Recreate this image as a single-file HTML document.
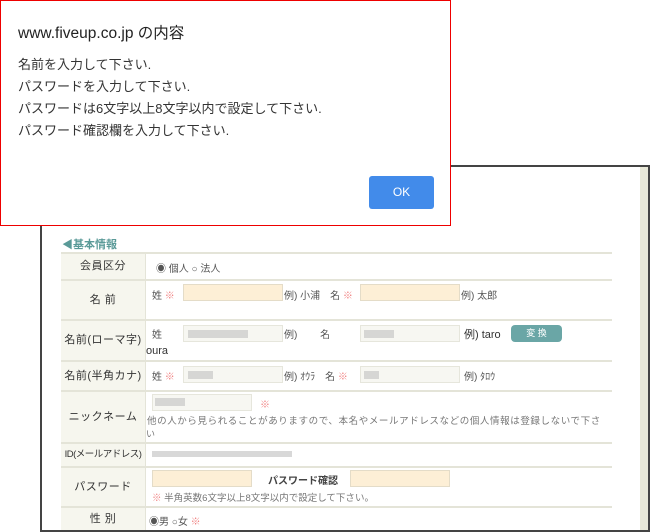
<!DOCTYPE html>
<html><head><meta charset="utf-8"><style>
*{margin:0;padding:0;box-sizing:border-box}
body{width:650px;height:532px;overflow:hidden;background:#fff;position:relative;font-family:"Liberation Sans","Noto Sans CJK JP",sans-serif;}
.a{position:absolute}
.frame{left:40px;top:165px;width:610px;height:367px;border:2px solid #444;background:#fff}
.strip{left:640px;top:167px;width:8px;height:363px;background:#e8e8d8}
.hl{position:absolute;left:61px;width:551px;height:2px;background:#e4e4d8}
.lab{position:absolute;left:61px;width:84px;background:#f6f6ee;font-size:11px;color:#333;text-align:center;white-space:nowrap;letter-spacing:.5px}
.vl{position:absolute;left:145px;width:1px;background:#e4e4d8}
.t{position:absolute;font-size:10px;color:#555;white-space:nowrap}
.r{color:#f08080}
.in{position:absolute;height:17px;border:1px solid #e4dcc8;background:#fdefd6}
.ig{position:absolute;height:17px;border:1px solid #e6e6dc;background:#f7f7f2}
.blur{position:absolute;height:8px;background:#c8c8c8;opacity:.7}
.dlg{left:0;top:0;width:451px;height:226px;border:1px solid #e00;background:#fff}
.dt{font-size:13px;color:#333;position:absolute;left:17px;white-space:nowrap}
</style></head><body>
<div class="a frame"></div>
<div class="a strip"></div>
<div class="t" style="left:62px;top:236px;color:#5a9a98;font-weight:bold;font-size:11px">◀基本情報</div>
<div class="hl" style="top:252px"></div>
<div class="lab" style="top:254px;height:25px;line-height:25px">会員区分</div>
<div class="lab" style="top:281px;height:38px;line-height:38px">名 前</div>
<div class="lab" style="top:321px;height:39px;line-height:39px">名前(ローマ字)</div>
<div class="lab" style="top:362px;height:28px;line-height:28px">名前(半角カナ)</div>
<div class="lab" style="top:392px;height:50px;line-height:50px">ニックネーム</div>
<div class="lab" style="top:444px;height:22px;line-height:22px;font-size:9.5px;letter-spacing:-.5px">ID(メールアドレス)</div>
<div class="lab" style="top:468px;height:38px;line-height:38px">パスワード</div>
<div class="lab" style="top:508px;height:22px;line-height:22px">性 別</div>
<div class="hl" style="top:279px"></div>
<div class="hl" style="top:319px"></div>
<div class="hl" style="top:360px"></div>
<div class="hl" style="top:390px"></div>
<div class="hl" style="top:442px"></div>
<div class="hl" style="top:466px"></div>
<div class="hl" style="top:506px"></div>
<div class="vl" style="top:254px;height:276px"></div>

<div class="t" style="left:156px;top:260px;font-size:10px">◉ 個人 ○ 法人</div>
<div class="t" style="left:152px;top:287px">姓 <span class="r">※</span></div>
<div class="in" style="left:183px;top:284px;width:100px"></div>
<div class="t" style="left:284px;top:287px">例) 小浦　名 <span class="r">※</span></div>
<div class="in" style="left:360px;top:284px;width:100px"></div>
<div class="t" style="left:461px;top:287px">例) 太郎</div>

<div class="t" style="left:152px;top:326px">姓</div>
<div class="ig" style="left:183px;top:325px;width:100px"></div><div class="blur" style="left:188px;top:330px;width:60px"></div>
<div class="t" style="left:284px;top:326px">例)　　 名</div>
<div class="ig" style="left:360px;top:325px;width:100px"></div><div class="blur" style="left:364px;top:330px;width:30px"></div>
<div class="t" style="left:464px;top:326px;font-size:11px;color:#333">例) taro</div>
<div class="a" style="left:511px;top:325px;width:51px;height:17px;background:#6aa6a6;border-radius:4px;color:#fff;font-size:9px;text-align:center;line-height:17px">変 換</div>
<div class="t" style="left:146px;top:345px;font-size:11px;color:#333">oura</div>

<div class="t" style="left:152px;top:368px">姓 <span class="r">※</span></div>
<div class="ig" style="left:183px;top:366px;width:100px"></div><div class="blur" style="left:188px;top:371px;width:25px"></div>
<div class="t" style="left:284px;top:368px">例) ｵｳﾗ　名 <span class="r">※</span></div>
<div class="ig" style="left:360px;top:366px;width:100px"></div><div class="blur" style="left:364px;top:371px;width:15px"></div>
<div class="t" style="left:464px;top:368px">例) ﾀﾛｳ</div>

<div class="ig" style="left:152px;top:394px;width:100px"></div><div class="blur" style="left:155px;top:398px;width:30px"></div>
<div class="t" style="left:260px;top:396px"><span class="r">※</span></div>
<div class="t" style="left:147px;top:413px;font-size:9.5px;color:#777;letter-spacing:.6px">他の人から見られることがありますので、本名やメールアドレスなどの個人情報は登録しないで下さ</div>
<div class="t" style="left:146px;top:427px;font-size:9px;color:#777">い</div>

<div class="blur" style="left:152px;top:451px;width:140px;height:6px"></div>

<div class="in" style="left:152px;top:470px;width:100px"></div>
<div class="t" style="left:268px;top:472px;font-weight:bold;color:#444">パスワード確認</div>
<div class="in" style="left:350px;top:470px;width:100px"></div>
<div class="t" style="left:152px;top:490px;font-size:9.5px;color:#777"><span class="r">※</span> 半角英数6文字以上8文字以内で設定して下さい。</div>

<div class="t" style="left:149px;top:513px;font-size:10px">◉男 ○女 <span class="r">※</span></div>

<div class="a dlg">
<div class="dt" style="top:20px;font-size:15.5px;color:#222">www.fiveup.co.jp の内容</div>
<div class="dt" style="top:53px">名前を入力して下さい.</div>
<div class="dt" style="top:75px">パスワードを入力して下さい.</div>
<div class="dt" style="top:97px">パスワードは6文字以上8文字以内で設定して下さい.</div>
<div class="dt" style="top:119px">パスワード確認欄を入力して下さい.</div>
<div class="a" style="left:368px;top:175px;width:65px;height:33px;background:#428bea;border-radius:3px;color:#fff;font-size:12px;text-align:center;line-height:33px">OK</div>
</div>
</body></html>
